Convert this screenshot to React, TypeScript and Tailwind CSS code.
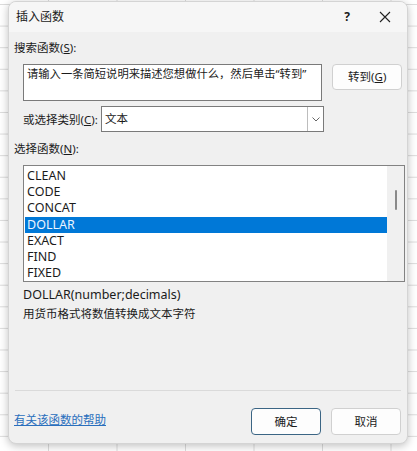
import React from "react";

const font = { fontFamily: '"Noto Sans", "Noto Sans CJK SC", sans-serif' };

const funcs = ["CLEAN", "CODE", "CONCAT", "DOLLAR", "EXACT", "FIND", "FIXED"];

const App = () => {
  return (
    <div
      style={font}
      className="w-[417px] h-[451px] overflow-hidden bg-white bg-[linear-gradient(to_right,#dcdcdc_1px,transparent_1px),linear-gradient(to_bottom,#dcdcdc_1px,transparent_1px)] bg-[size:68.5px_21.6px] bg-[position:48px_4px] pl-[8px] pt-[1px] text-[11.5px] text-[#1b1b1b]"
    >
      <div className="w-[400px] h-[443px] rounded-[8px] bg-[#f0f0f0] shadow-[0_2px_8px_rgba(0,0,0,0.25)] border border-[#d4d4d4] overflow-hidden flex flex-col">
        {/* title bar */}
        <div className="h-[30px] flex items-center bg-[#f6f6f6] pl-[7px] shrink-0">
          <span className="flex-1 text-[12px]">插入函数</span>
          <span className="w-[20px] text-center font-bold text-[12px] mr-[22px]">?</span>
          <svg width="12" height="12" viewBox="0 0 12 12" className="mr-[16px]">
            <path d="M1 1L11 11M11 1L1 11" stroke="#222" strokeWidth="1.1" />
          </svg>
        </div>

        {/* body */}
        <div className="flex-1 flex flex-col pl-[5px] pr-[5px]">
          <div className="mt-[7px] leading-[17px]">
            搜索函数(<span className="underline">S</span>):
          </div>

          <div className="mt-[8px] flex items-start ml-[9px]">
            <div className="w-[301px] h-[37px] bg-white border border-[#7a7a7a] px-[3px] pt-0 leading-[17px] whitespace-nowrap overflow-hidden text-[11.3px]">
              请输入一条简短说明来描述您想做什么，然后单击“转到”
            </div>
            <button className="ml-[10px] w-[70px] h-[26px] rounded-[4px] bg-[#fdfdfd] border border-[#d0d0d0] text-[11.5px]">
              转到(<span className="underline">G</span>)
            </button>
          </div>

          <div className="mt-[5px] flex items-center ml-[9px]">
            <span className="w-[78px] leading-[17px] whitespace-nowrap">
              或选择类别(<span className="underline">C</span>):
            </span>
            <div className="w-[223px] h-[26px] bg-white border border-[#7a7a7a] flex items-center">
              <span className="flex-1 pl-[3px]">文本</span>
              <div className="w-[16px] h-full border-l border-[#bdbdbd] flex items-center justify-center">
                <svg width="8" height="5" viewBox="0 0 8 5">
                  <path d="M0.5 0.5L4 4L7.5 0.5" stroke="#555" strokeWidth="0.9" fill="none" />
                </svg>
              </div>
            </div>
          </div>

          <div className="mt-[8px] leading-[17px]">
            选择函数(<span className="underline">N</span>):
          </div>

          <div className="mt-[8px] ml-[9px] w-[382px] h-[117px] bg-white border border-[#828282] flex">
            <div className="flex-1 pl-[1px] pt-[2px]">
              {funcs.map((f) => (
                <div
                  key={f}
                  className={
                    f === "DOLLAR"
                      ? "h-[16.2px] leading-[16px] pl-[2px] bg-[#0078d7] text-[#eaf4ff] text-[12.5px]"
                      : "h-[16.2px] leading-[16px] pl-[2px] text-[12.5px]"
                  }
                >
                  {f}
                </div>
              ))}
            </div>
            <div className="w-[17px] bg-[#f0f0f0] flex justify-center">
              <div className="mt-[24px] w-[2px] h-[20px] bg-[#8a8a8a] rounded-full" />
            </div>
          </div>

          <div className="mt-[4px] ml-[9px] leading-[17px] text-[12.5px]">DOLLAR(number;decimals)</div>
          <div className="mt-[2px] ml-[9px] leading-[17px]">用货币格式将数值转换成文本字符</div>

          <div className="mt-[68px] mx-[1px] h-px bg-[#dadada]" />

          <div className="mt-[17px] flex items-center">
            <a className="flex-1 text-[#2a6fbd] underline leading-[17px] -mt-[5px]">有关该函数的帮助</a>
            <button className="w-[70px] h-[27px] rounded-[4px] bg-[#fdfdfd] border-[1.5px] border-[#3b6584] text-[11.5px]">
              确定
            </button>
            <button className="ml-[10px] mr-[1px] w-[70px] h-[27px] rounded-[4px] bg-[#fdfdfd] border border-[#d0d0d0] text-[11.5px]">
              取消
            </button>
          </div>
        </div>
      </div>
    </div>
  );
};

export default App;
